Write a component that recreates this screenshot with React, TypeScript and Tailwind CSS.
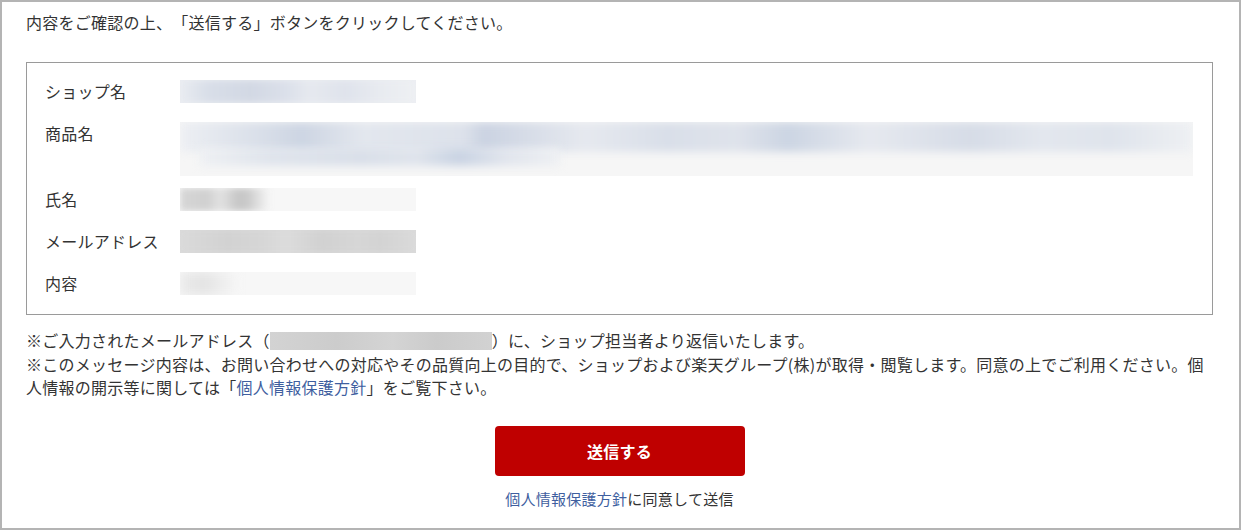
import React from "react";

const font = "font-['Noto_Sans_CJK_JP','Noto_Sans',sans-serif]";

function Row({
  label,
  children,
  pb,
}: {
  label: string;
  children: React.ReactNode;
  pb: string;
}) {
  return (
    <div className={`flex ${pb}`}>
      <div className="w-[135px] shrink-0 leading-[23px]">{label}</div>
      <div className="flex-1">{children}</div>
    </div>
  );
}

export default function App() {
  return (
    <div
      className={`${font} [text-spacing-trim:space-all] tracking-[0.25px] w-[1241px] h-[530px] border-2 border-[#b4b4b4] bg-white text-[#333] text-[16px] pl-[24px] pr-[26px] pt-[8px] box-border`}
    >
      <p className="leading-[24px]">
        内容をご確認の上、「送信する」ボタンをクリックしてください。
      </p>

      <div className="mt-[28px] border border-[#9a9a9a] pl-[18px] pr-[19px] pt-[17px] pb-[19px]">
        <Row label="ショップ名" pb="pb-[19px]">
          <div className="w-[236px] h-[23px] overflow-hidden bg-[#eceef2]">
            <div className="h-full blur-[3px] bg-[linear-gradient(90deg,#e9ecf1_0%,#d8dee8_12%,#d2d8e4_30%,#dbe0ea_45%,#e6e9ef_55%,#dfe3ec_70%,#e8ebf0_85%,#eef0f3_100%)]" />
          </div>
        </Row>
        <Row label="商品名" pb="pb-[12px]">
          <div className="w-full h-[54px] overflow-hidden bg-[#f6f6f6] relative">
            <div className="absolute left-0 right-0 top-0 h-[30px] blur-[4px] bg-[linear-gradient(90deg,#edeff3_0%,#d9dfe9_8%,#cdd5e3_12%,#e3e7ee_18%,#dde2eb_28%,#cbd3e2_30%,#e6e9ef_40%,#d9dfe9_48%,#dfe3eb_55%,#ccd5e3_60%,#e6e9ef_68%,#d6dce7_78%,#e3e7ee_85%,#dfe4ec_92%,#eef0f3_100%)]" />
            <div className="absolute left-[20px] w-[360px] top-[26px] h-[18px] blur-[4px] bg-[linear-gradient(90deg,#eef0f3_0%,#dfe4ec_20%,#d9dfe9_45%,#dfe4ec_60%,#c9d3e3_72%,#e1e5ed_85%,#eef0f3_100%)]" />
          </div>
        </Row>
        <Row label="氏名" pb="pb-[19px]">
          <div className="w-[236px] h-[23px] overflow-hidden bg-[#f7f7f7] relative">
            <div className="absolute left-0 top-0 w-[90px] h-full blur-[3px] bg-[linear-gradient(90deg,#d6d6d6_0%,#d0d0d0_30%,#e2e2e2_45%,#c6c6c6_65%,#cacaca_75%,#f7f7f7_100%)]" />
          </div>
        </Row>
        <Row label="メールアドレス" pb="pb-[19px]">
          <div className="w-[236px] h-[23px] overflow-hidden bg-[#dadada]">
            <div className="h-full blur-[3px] bg-[linear-gradient(90deg,#dadada_0%,#d2d2d2_20%,#d6d6d6_35%,#dcdcdc_45%,#d1d1d1_60%,#d6d6d6_75%,#d3d3d3_85%,#dadada_100%)]" />
          </div>
        </Row>
        <Row label="内容" pb="pb-0">
          <div className="w-[236px] h-[23px] overflow-hidden bg-[#f7f7f7] relative">
            <div className="absolute left-0 top-0 w-[60px] h-full blur-[4px] bg-[linear-gradient(90deg,#ebebeb_0%,#e4e4e4_40%,#f7f7f7_100%)]" />
          </div>
        </Row>
      </div>

      <div className="mt-[14px] leading-[23.5px]">
        <p>
          ※ご入力されたメールアドレス（
          <span className="inline-block align-middle w-[222px] h-[18px] -mt-[3px] bg-[linear-gradient(90deg,#d3d3d3_0%,#cccccc_30%,#d4d4d4_55%,#cbcbcb_75%,#d2d2d2_100%)]" />
          ）に、ショップ担当者より返信いたします。
        </p>
        <p>
          ※このメッセージ内容は、お問い合わせへの対応やその品質向上の目的で、ショップおよび楽天グループ(株)が取得・閲覧します。同意の上でご利用ください。個
          <br />
          人情報の開示等に関しては「
          <a className="text-[#3f5f9f]">個人情報保護方針</a>
          」をご覧下さい。
        </p>
      </div>

      <div className="flex flex-col items-center mt-[26px]">
        <button className="w-[250px] h-[50px] rounded-[4px] bg-[#bf0000] text-white font-bold text-[16px]">
          送信する
        </button>
        <p className="mt-[12px] text-[15px] leading-[22px]">
          <a className="text-[#3f5f9f]">個人情報保護方針</a>に同意して送信
        </p>
      </div>
    </div>
  );
}
